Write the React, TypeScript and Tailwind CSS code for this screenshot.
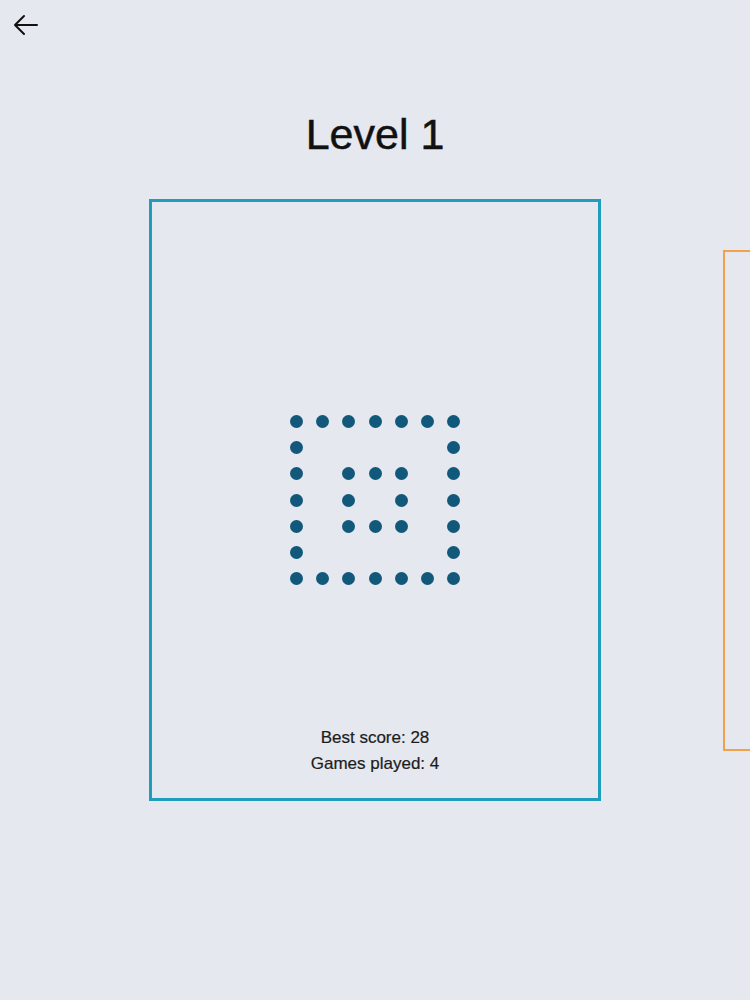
import React from "react";

const pattern = [
  "1111111",
  "1000001",
  "1011101",
  "1010101",
  "1011101",
  "1000001",
  "1111111",
];

function DotGrid() {
  return (
    <div className="grid grid-cols-[repeat(7,13px)] gap-x-[13.33px] gap-y-[13.33px]">
      {pattern.flatMap((row, r) =>
        row.split("").map((c, i) => (
          <div
            key={`${r}-${i}`}
            className={
              c === "1"
                ? "w-[13px] h-[13px] rounded-full bg-[#11587a]"
                : "w-[13px] h-[13px]"
            }
          />
        ))
      )}
    </div>
  );
}

function BackArrow() {
  return (
    <svg width="26" height="22" viewBox="0 0 26 22" fill="none">
      <path
        d="M3 11H25M12 2L3 11L12 20"
        stroke="#111"
        strokeWidth="2"
        strokeLinecap="round"
        strokeLinejoin="round"
      />
    </svg>
  );
}

export default function App() {
  return (
    <div className="w-[750px] h-[1000px] bg-[#e5e8ef] overflow-hidden font-['Liberation_Sans',Arial,sans-serif]">
      <div className="pl-[12px] pt-[14px] h-[36px]">
        <button className="block">
          <BackArrow />
        </button>
      </div>

      <h1 className="mt-[76px] text-center text-[43px] leading-[44px] text-[#111] [-webkit-text-stroke:0.5px_#111]">
        Level 1
      </h1>

      <div className="mt-[43px] flex items-center gap-[122px] pl-[149px]">
        <div className="shrink-0 w-[452px] h-[602px] border-[3px] border-[#1f9dbd] flex flex-col">
          <div className="h-[76px]" />
          <div className="flex-1 flex items-center justify-center">
            <DotGrid />
          </div>
          <div className="h-[76px] flex flex-col items-center justify-start pt-[3px] text-[17px] leading-[26px] text-[#1c1c1c] [-webkit-text-stroke:0.2px_#1c1c1c]">
            <p>Best score: 28</p>
            <p>Games played: 4</p>
          </div>
        </div>
        <div className="shrink-0 w-[376px] h-[501px] border-2 border-[#f5a04b]" />
      </div>
    </div>
  );
}
